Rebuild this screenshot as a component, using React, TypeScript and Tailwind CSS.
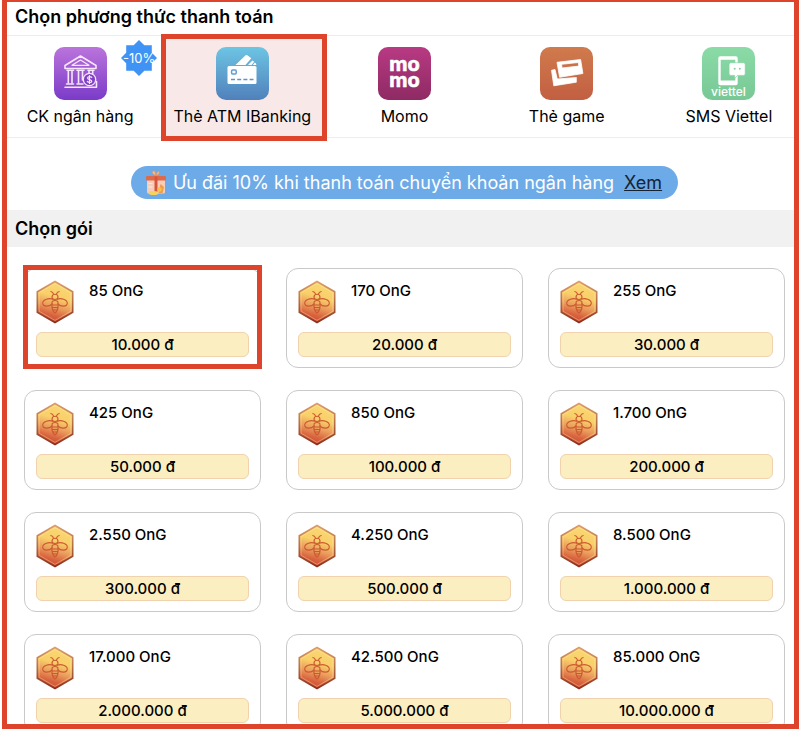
import React from 'react';

interface Method {
  id: string;
  label: string;
  icon: React.ReactNode;
  badge?: string;
}

interface Pack {
  amount: string;
  price: string;
}

const ACTIVE_METHOD = 'atm';
const ACTIVE_PACK = '85';

interface TileProps {
  id: string;
  from: string;
  to: string;
  children: React.ReactNode;
}

const IconTile: React.FC<TileProps> = ({ id, from, to, children }) => (
  <svg viewBox="0 0 53 53" className="size-[53px]" aria-hidden="true">
    <defs>
      <linearGradient id={id} x1="0" y1="0" x2="0" y2="1">
        <stop offset="0" stopColor={from} />
        <stop offset="1" stopColor={to} />
      </linearGradient>
    </defs>
    <rect width="53" height="53" rx="10" fill={`url(#${id})`} />
    {children}
  </svg>
);

const BankIcon = () => (
  <IconTile id="tile-bank" from="#bb74dc" to="#7a3bc8">
    <g fill="none" stroke="#f6e6fb" strokeWidth="1.6" strokeLinejoin="round" strokeLinecap="round">
      <path d="M11 18.500 26.500 9 42 18.500v3H11z" />
      <path d="M18 18.300 26.500 13 35 18.300z" strokeWidth="1.2" />
      <path d="M13 23.300h6.500M23 23.300h7M34 23.300h6" />
      <path d="M14.300 24v12M18 24v12M24.500 24v12M28.500 24v9M35 24v2.500M38.700 24v2.500" />
      <path d="M12.500 37h7M23 37h6M11 40.300h31.500M42.500 34.500v5.500" />
      <circle cx="35.500" cy="32.500" r="6.200" fill="#7f40c7" stroke="#f6e6fb" strokeWidth="1.300" />
      <path d="M37.700 30.400c-.8-1.200-4.200-1.100-4.200.7 0 1.900 4.300 1 4.300 3.100 0 1.700-3.600 1.700-4.500.2M35.500 28.600v7.800" strokeWidth="1.200" />
    </g>
  </IconTile>
);

const AtmIcon = () => (
  <IconTile id="tile-atm" from="#6cc5e4" to="#5180bb">
    <path d="M19.500 18 29.600 8.300q.8-.7 1.700 0l4 3-5.800 6.700z" fill="#fff" />
    <path d="m32 18 4.400-4.500 1.800 1.300-2.700 3.200zM36.800 18l2-2.400q1.700.9 1.500 2.400z" fill="#fff" />
    <rect x="11.500" y="19" width="29" height="18" rx="1.500" fill="#fff" />
    <rect x="15.600" y="23" width="4.600" height="4" rx="1" fill="#fff" stroke="#5f9fce" strokeWidth="1.500" />
    <path d="M15 32.500h22.500" stroke="#5d94c7" strokeWidth="1.600" strokeDasharray="4 2.200" />
  </IconTile>
);

const MomoIcon = () => (
  <IconTile id="tile-momo" from="#b83a83" to="#8e2a63">
    <text fill="#fff" stroke="#fff" strokeWidth=".6" fontFamily="Inter, sans-serif" fontSize="20" fontWeight="700" textAnchor="middle">
      <tspan x="26.500" y="24">mo</tspan>
      <tspan x="26.500" y="40">mo</tspan>
    </text>
  </IconTile>
);

const GameCardIcon = () => (
  <IconTile id="tile-game" from="#d07a4d" to="#c25f42">
    <g fill="#fff" stroke="#fff" strokeWidth=".8" strokeLinejoin="round">
      <path d="m11.500 23.300 3.500-.8 2.300 9.500 19-1.500v4.700l-22.500 3.600z" />
      <path fillRule="evenodd" d="m17 15.300 23.600-2.800 2.300 14-23.300 3.800zM21.500 17.300l.6 3.700 16.700-1.900-.5-3.600z" />
    </g>
  </IconTile>
);

const ViettelIcon = () => (
  <IconTile id="tile-viettel" from="#8adba6" to="#78c896">
    <path
      fillRule="evenodd"
      fill="#fff"
      d="M18.300 9.200h15.400q2 0 2 2v25q0 2-2 2H18.300q-2 0-2-2v-25q0-2 2-2zM18.700 12.700v20.800h14.600V12.700z"
    />
    <path d="M28.800 15.700h12.700q1.700 0 1.700 1.700v9.300q0 1.700-1.700 1.700h-6l-2.800 3v-3h-3.900q-1.700 0-1.700-1.700v-9.300q0-1.700 1.700-1.700z" fill="#fff" stroke="#82d29e" strokeWidth=".6" />
    <circle cx="32.700" cy="21.700" r="1" fill="#82d29e" />
    <circle cx="37.800" cy="21.700" r="1" fill="#82d29e" />
    <text x="26.500" y="48.500" fill="#fff" fontFamily="Inter, sans-serif" fontSize="12" fontWeight="500" textAnchor="middle">
      viettel
    </text>
  </IconTile>
);

const BeeIcon = () => (
  <svg viewBox="0 0 38 44" className="w-[38px] h-11 shrink-0" aria-hidden="true">
    <defs>
      <linearGradient id="honey" x1=".65" y1="0" x2=".4" y2="1">
        <stop offset="0" stopColor="#f9d873" />
        <stop offset=".38" stopColor="#f9cf6a" />
        <stop offset=".62" stopColor="#ea9c5c" />
        <stop offset=".82" stopColor="#d9643f" />
        <stop offset="1" stopColor="#cc4730" />
      </linearGradient>
      <linearGradient id="honey-rim" x1="0" y1="0" x2="0" y2="1">
        <stop offset="0" stopColor="#dd9c6a" />
        <stop offset=".5" stopColor="#b26f45" />
        <stop offset="1" stopColor="#8c2f1c" />
      </linearGradient>
    </defs>
    <path d="M19 1.500 36.700 11.700v20.600L19 42.500 1.300 32.300V11.700z" fill="url(#honey)" stroke="url(#honey-rim)" strokeWidth="1.600" />
    <path d="M19 3.600 34.900 12.800v18.400L19 40.400 3.100 31.200V12.800z" fill="none" stroke="#fff0b4" strokeOpacity=".45" strokeWidth=".8" />
    <g fill="none" stroke="#cb5a30" strokeWidth="1.100" strokeLinecap="round" strokeLinejoin="round">
      <path d="M14.800 11.500q2.200.3 2.700 2.600M23.200 11.500q-2.200.3-2.700 2.600" />
      <path d="M16 17.300q0-3 3-3t3 3q0 2.200-3 2.200t-3-2.200z" />
      <path d="M17 19.300c-4-1.800-10.300.2-10.300 3.700 0 4.200 7 3.800 9.300.8M21 19.300c4-1.800 10.300.2 10.300 3.700 0 4.200-7 3.800-9.300.8" />
      <path d="M16.200 21.500q-1.400 8.500 2.800 11.500 4.200-3 2.800-11.500-2.800-2-5.600 0zM16 25h6M16 27.500h6M17 30h4" />
    </g>
  </svg>
);

const GiftIcon = () => (
  <svg viewBox="0 0 22 27" className="w-[22px] h-[27px]" aria-hidden="true">
    <rect x="2" y="10" width="18" height="14.500" rx="1.500" fill="#f6cdb9" />
    <rect x="1" y="7" width="20" height="4.500" rx="1" fill="#dd6b4b" />
    <path d="M9.500 7.500h3v16h-3z" fill="#d8553b" />
    <path d="M10.500 6.500C7 6 6 2 8.500 1.800S11 5 10.800 6.500C12 2 14 1.500 14.500 3s-1.500 3.500-3.700 3.500z" fill="#f0b787" stroke="#d98a5e" strokeWidth=".6" />
    <path d="m15.500 15 3.500 3-1.500 6h-4z" fill="#ef9b4b" />
    <ellipse cx="8.500" cy="24" rx="5" ry="2" fill="#f4d35e" />
    <circle cx="14.500" cy="20.500" r="2.200" fill="#f6c24d" />
    <path d="M3.500 14.500h4M3.500 18h4" stroke="#fbe9de" strokeWidth="1.200" />
  </svg>
);

const DiscountBadge: React.FC<{ text: string }> = ({ text }) => (
  <span className="absolute top-1 right-1 size-9 grid place-items-center text-[13px] leading-5 text-white">
    <svg viewBox="0 0 36 36" className="absolute inset-0" aria-hidden="true">
      <path d="m18 0 5.300 5.200H30.800v7.500L36 18l-5.200 5.300v7.500h-7.500L18 36l-5.300-5.200H5.200v-7.500L0 18l5.200-5.300V5.200h7.500z" fill="#3f93f4" />
    </svg>
    <span className="relative">{text}</span>
  </span>
);

const methods: Method[] = [
  { id: 'bank', label: 'CK ngân hàng', icon: <BankIcon />, badge: '-10%' },
  { id: 'atm', label: 'Thẻ ATM IBanking', icon: <AtmIcon /> },
  { id: 'momo', label: 'Momo', icon: <MomoIcon /> },
  { id: 'game', label: 'Thẻ game', icon: <GameCardIcon /> },
  { id: 'sms', label: 'SMS Viettel', icon: <ViettelIcon /> },
];

const packs: Pack[] = [
  { amount: '85', price: '10.000' },
  { amount: '170', price: '20.000' },
  { amount: '255', price: '30.000' },
  { amount: '425', price: '50.000' },
  { amount: '850', price: '100.000' },
  { amount: '1.700', price: '200.000' },
  { amount: '2.550', price: '300.000' },
  { amount: '4.250', price: '500.000' },
  { amount: '8.500', price: '1.000.000' },
  { amount: '17.000', price: '2.000.000' },
  { amount: '42.500', price: '5.000.000' },
  { amount: '85.000', price: '10.000.000' },
];

const MethodButton: React.FC<{ method: Method; active: boolean }> = ({ method, active }) => (
  <button
    type="button"
    aria-pressed={active}
    className={`relative flex flex-col items-center gap-1 pt-[11px] ${active ? 'bg-[#f8e9e8]' : ''}`}
  >
    {method.icon}
    <span className="text-base leading-6 whitespace-nowrap">{method.label}</span>
    {method.badge && <DiscountBadge text={method.badge} />}
    {active && <span className="absolute -top-0.5 -bottom-1 left-0 -right-1 border-5 border-[#de432b]" />}
  </button>
);

const PackCard: React.FC<{ pack: Pack; active: boolean }> = ({ pack, active }) => (
  <button
    type="button"
    aria-pressed={active}
    className="relative flex flex-col justify-between h-[100px] p-[11px] pb-2.5 rounded-xl border border-[#c9c9c9] text-left font-medium"
  >
    <span className="flex gap-[15px]">
      <BeeIcon />
      <span className="text-[15px] leading-[22px]">{pack.amount} OnG</span>
    </span>
    <span className="w-full h-[25px] rounded-md border border-[#f0d3ae] bg-[#fbeec1] text-center text-[15px] leading-[23px]">
      {pack.price} đ
    </span>
    {active && <span className="absolute -inset-x-0.5 -top-1 -bottom-0.5 border-5 border-[#de432b]" />}
  </button>
);

export default function App() {
  return (
    <main className="h-screen overflow-hidden bg-white pl-0.5 pr-px font-['Inter',sans-serif] text-black">
      <div className="h-full overflow-hidden border-x-5 border-t-2 border-b-5 border-[#de432b]">
        <h2 className="h-[34px] px-2 pb-1 flex items-center text-lg font-semibold border-b border-[#ededed]">
          Chọn phương thức thanh toán
        </h2>
        <div className="h-[102px] grid grid-cols-5 -ml-2 -mr-4 border-b border-[#ededed]">
          {methods.map((method) => (
            <MethodButton key={method.id} method={method} active={method.id === ACTIVE_METHOD} />
          ))}
        </div>

        <div className="flex justify-center pt-7 pb-[11px] pl-[17px] pr-[9px]">
          <p className="h-[33px] flex items-center rounded-full bg-[#6daae8] pl-3.5 pr-4 text-lg text-white whitespace-nowrap">
            <GiftIcon />
            <span className="ml-1.5">Ưu đãi 10% khi thanh toán chuyển khoản ngân hàng</span>
            <a href="#uu-dai" className="ml-2.5 text-[#152333] underline">
              Xem
            </a>
          </p>
        </div>

        <h2 className="h-[37px] px-2 flex items-center bg-[#f1f1f1] text-lg font-semibold">Chọn gói</h2>
        <div className="grid grid-cols-3 gap-x-[25px] gap-y-[22px] pt-[21px] pl-[17px] pr-[9px]">
          {packs.map((pack) => (
            <PackCard key={pack.amount} pack={pack} active={pack.amount === ACTIVE_PACK} />
          ))}
        </div>
      </div>
    </main>
  );
}
